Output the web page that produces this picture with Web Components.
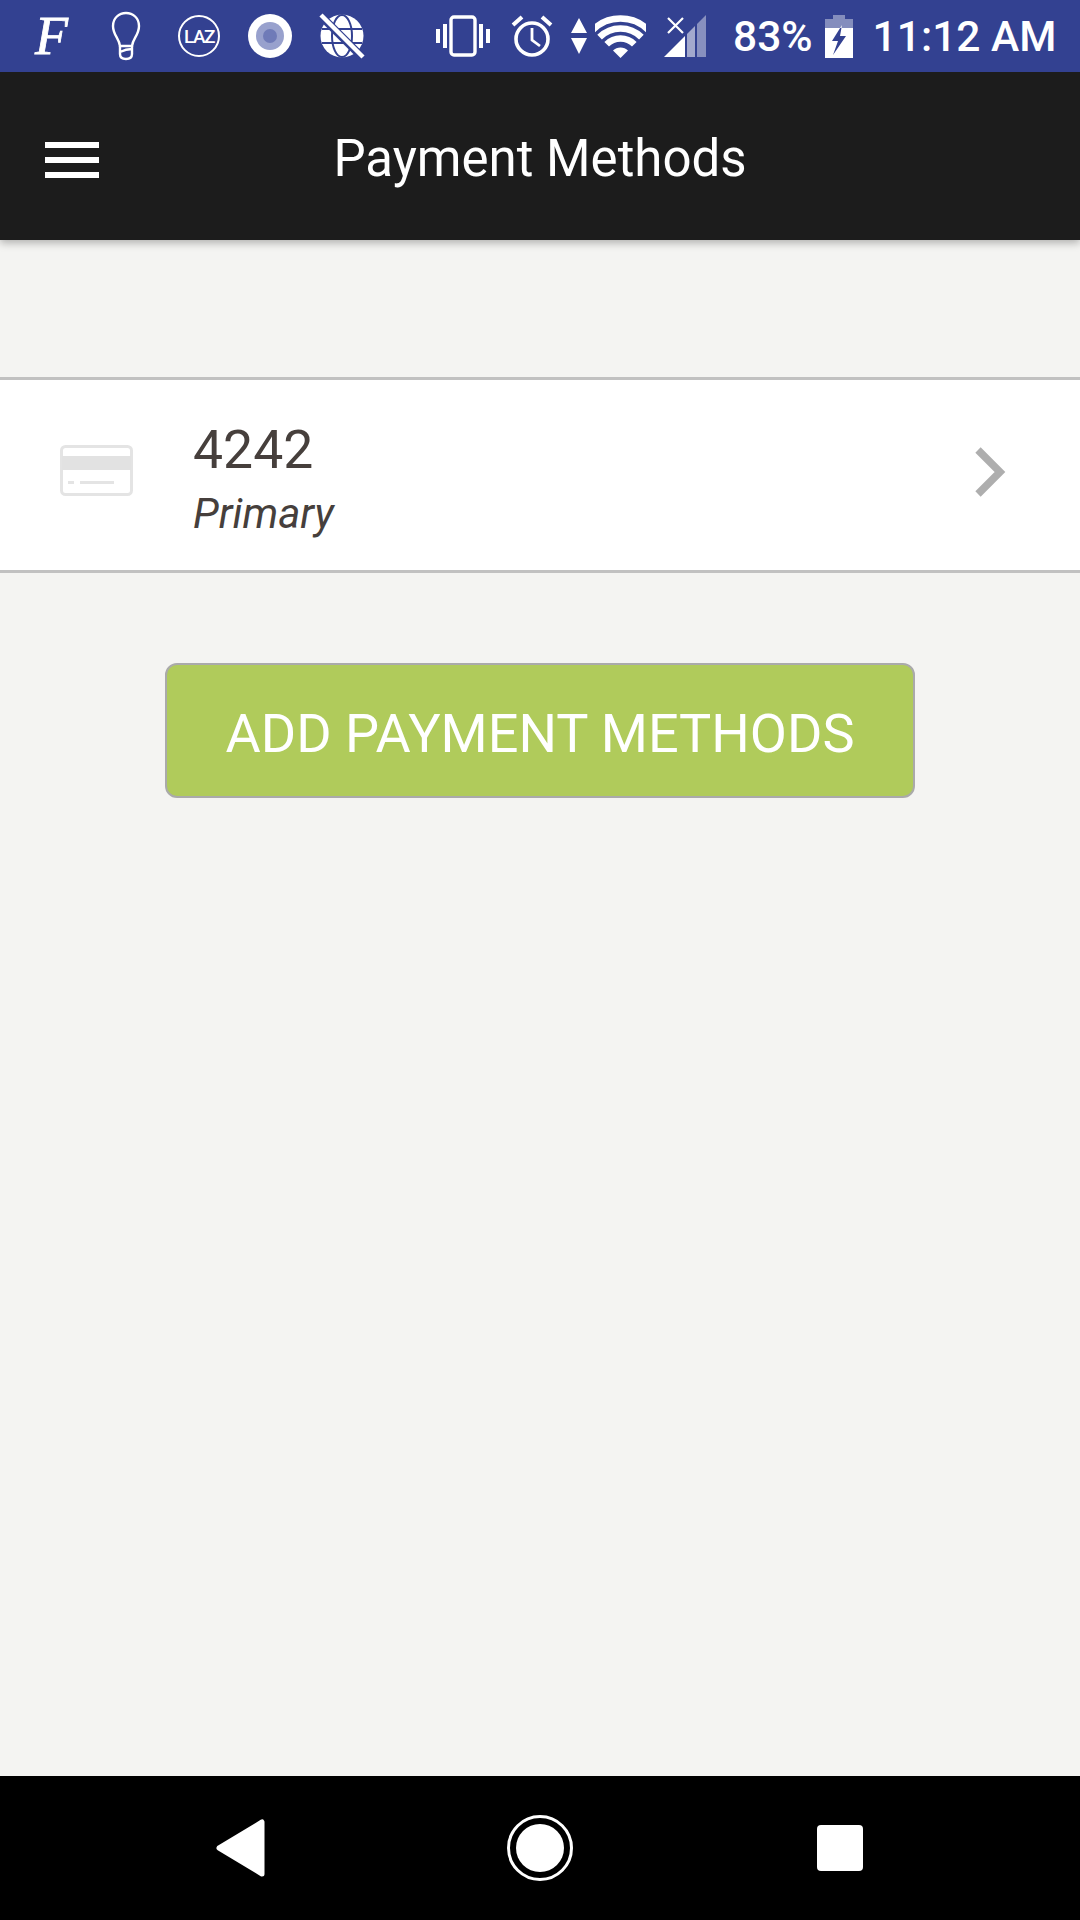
<!DOCTYPE html>
<html>
<head>
<meta charset="utf-8">
<title>Payment Methods</title>
<style>
  html, body { margin: 0; padding: 0; }
  body { font-family: Roboto, "Liberation Sans", sans-serif; background: #f4f4f2; }
</style>
</head>
<body>
<payment-screen>
  <status-bar slot="status" battery="83%" time="11:12 AM"></status-bar>
  <app-bar slot="header">Payment Methods</app-bar>
  <payment-row number="4242" label="Primary"></payment-row>
  <action-button>ADD PAYMENT METHODS</action-button>
  <nav-bar slot="nav"></nav-bar>
</payment-screen>

<script>
customElements.define('payment-screen', class extends HTMLElement {
  constructor() {
    super()
    this.attachShadow({ mode: 'open' }).innerHTML = `
      <style>
        :host { display: flex; flex-direction: column; width: 1080px; height: 1920px; overflow: hidden; background: #f4f4f2; }
        main { flex: 1; padding-top: 137px; }
      </style>
      <slot name="status"></slot>
      <slot name="header"></slot>
      <main><slot></slot></main>
      <slot name="nav"></slot>`
  }
})

customElements.define('status-bar', class extends HTMLElement {
  constructor() {
    super()
    this.attachShadow({ mode: 'open' }).innerHTML = `
      <style>
        :host { display: flex; align-items: center; height: 72px; background: #334191; color: #fff; font-family: Roboto, sans-serif; font-weight: 500; font-size: 42.5px; position: relative; z-index: 3; }
        svg { display: block; flex: none; }
        .txt { flex: none; line-height: 72px; padding-top: 2px; white-space: nowrap; }
        .f { font: italic 400 54px "Liberation Serif", serif; -webkit-text-stroke: .8px #fff; margin-left: 35px; width: 38px; line-height: 72px; }
      </style>
      <span class="f">F</span>
      <svg style="margin-left:38px" width="30" height="50" viewBox="0 0 30 50" fill="none" stroke="#fff" stroke-width="2.4">
        <path d="M9 35 C8 27 2 24 2 15 C2 7 8 2 15 2 C22 2 28 7 28 15 C28 24 22 27 21 35 Z"/>
        <path d="M9 35 V43 Q9 48 15 48 Q21 48 21 43 V35 M9 41 Q15 38 21 38"/>
      </svg>
      <svg style="margin-left:36px" width="44" height="44" viewBox="0 0 44 44">
        <circle cx="22" cy="22" r="20" fill="none" stroke="#fff" stroke-width="2"/>
        <text x="22" y="29" text-anchor="middle" fill="#fff" font-family="Roboto, sans-serif" font-size="19" letter-spacing="-1.5">LAZ</text>
      </svg>
      <svg style="margin-left:27px" width="44" height="44" viewBox="0 0 44 44">
        <circle cx="22" cy="22" r="22" fill="#fff"/>
        <circle cx="22" cy="22" r="14" fill="#98a1cd"/>
        <circle cx="22" cy="22" r="7" fill="#6f7bb8"/>
      </svg>
      <svg style="margin-left:27px" width="46" height="46" viewBox="0 0 46 46">
        <circle cx="23" cy="23" r="21.5" fill="#fff"/>
        <g fill="none" stroke="#334191" stroke-width="2">
          <ellipse cx="23" cy="23" rx="10" ry="21"/>
          <path d="M3 16 H43 M3 30 H43"/>
          <path d="M1 2 L44 45" stroke-width="8"/>
        </g>
        <path d="M2 2 L44 44" stroke="#fff" stroke-width="4.5" fill="none"/>
      </svg>
      <svg style="margin-left:71px" width="54" height="42" viewBox="0 0 54 42" fill="#fff">
        <rect x="0" y="14" width="4" height="14"/><rect x="7" y="9" width="4" height="24"/>
        <rect x="43" y="9" width="4" height="24"/><rect x="50" y="14" width="4" height="14"/>
        <rect x="15" y="2" width="24" height="38" rx="3" fill="none" stroke="#fff" stroke-width="3.4"/>
      </svg>
      <svg style="margin-left:21px" width="42" height="42" viewBox="0 0 42 42" fill="none" stroke="#fff">
        <circle cx="21" cy="24" r="16" stroke-width="3.6"/>
        <path d="M21 13 V25 L29 31" stroke-width="2.8"/>
        <path d="M2 10 L11 2 M40 10 L31 2" stroke-width="4"/>
      </svg>
      <svg style="margin-left:18px" width="16" height="36" viewBox="0 0 16 36" fill="#fff">
        <path d="M8 0 L16 15 H0 Z M0 20 H16 L8 36 Z"/>
      </svg>
      <svg style="margin-left:8px" width="51" height="43" viewBox="0 0 51 43" fill="none" stroke="#fff" stroke-width="6.5">
        <path d="M-2.4 15.1 A39.5 39.5 0 0 1 53.4 15.1"/>
        <path d="M4.6 22.1 A29.5 29.5 0 0 1 46.4 22.1"/>
        <path d="M11.7 29.2 A19.5 19.5 0 0 1 39.3 29.2"/>
        <path d="M18 35.5 A10.6 10.6 0 0 1 33 35.5 L25.5 43 Z" fill="#fff" stroke="none"/>
      </svg>
      <svg style="margin-left:18px" width="42" height="42" viewBox="0 0 42 42" fill="#fff">
        <path d="M33 42 V9 L42 0 V42 Z" opacity=".42"/>
        <path d="M23 42 V19 L31 11 V42 Z" opacity=".55"/>
        <path d="M0 42 L21 21 V42 Z"/>
        <path d="M4 3 L19 18 M19 3 L4 18" stroke="#fff" stroke-width="2.2"/>
      </svg>
      <span class="txt" style="margin-left:27px">${this.getAttribute('battery')}</span>
      <svg style="margin-left:12px" width="28" height="43" viewBox="0 0 28 43" fill="#fff">
        <path d="M8 0 H20 V4 H28 V13 H0 V4 H8 Z" opacity=".4"/>
        <path fill-rule="evenodd" d="M0 13 H28 V43 H0 Z M17 10 L7 26 H13 L8 40 L21 21 H15 Z"/>
      </svg>
      <span class="txt" style="margin-left:20px">${this.getAttribute('time')}</span>`
  }
})

customElements.define('app-bar', class extends HTMLElement {
  constructor() {
    super()
    this.attachShadow({ mode: 'open' }).innerHTML = `
      <style>
        :host { display: grid; grid-template-columns: 1fr auto 1fr; align-items: center; height: 168px; background: #1c1c1c; color: #fff; box-shadow: 0 3px 8px rgba(0,0,0,.28); position: relative; z-index: 2; }
        .menu { display: flex; flex-direction: column; gap: 9px; margin: 8px 0 0 45px; width: 54px; }
        .menu i { display: block; height: 6px; background: #fff; }
        h1 { margin: 0; padding-top: 5px; font: 400 51px Roboto, sans-serif; line-height: 1; }
      </style>
      <div class="menu"><i></i><i></i><i></i></div>
      <h1><slot></slot></h1>
      <div></div>`
  }
})

customElements.define('payment-row', class extends HTMLElement {
  constructor() {
    super()
    this.attachShadow({ mode: 'open' }).innerHTML = `
      <style>
        :host { display: flex; align-items: center; height: 190px; background: #fff; border-top: 3px solid #c1c1c1; border-bottom: 3px solid #c1c1c1; color: #463f3c; font-family: Roboto, sans-serif; }
        svg { display: block; flex: none; }
        .text { margin: 9px 0 0 60px; display: flex; flex-direction: column; }
        .num { font-size: 53.5px; line-height: 60px; }
        .label { font-size: 42px; font-style: italic; line-height: 52px; margin-top: 8px; }
        .go { margin-left: auto; margin-right: 74px; margin-bottom: 7px; }
      </style>
      <svg style="margin-left:60px;margin-bottom:10px" width="73" height="51" viewBox="0 0 73 51">
        <rect x="1.5" y="1.5" width="70" height="48" rx="4" fill="#fff" stroke="#e4e4e4" stroke-width="3"/>
        <rect x="2" y="11" width="69" height="14" fill="#e2e2e2"/>
        <rect x="8" y="36" width="6" height="3" fill="#e4e4e4"/>
        <rect x="20" y="36" width="34" height="3" fill="#e4e4e4"/>
      </svg>
      <div class="text">
        <span class="num">${this.getAttribute('number')}</span>
        <span class="label">${this.getAttribute('label')}</span>
      </div>
      <svg class="go" width="32" height="50" viewBox="0 0 32 50" fill="none" stroke="#aeaeae" stroke-width="7.5">
        <path d="M4 3 L26 25 L4 47"/>
      </svg>`
  }
})

customElements.define('action-button', class extends HTMLElement {
  constructor() {
    super()
    this.attachShadow({ mode: 'open' }).innerHTML = `
      <style>
        :host { display: block; margin-top: 90px; }
        button { display: block; box-sizing: border-box; width: 750px; height: 135px; margin: 0 auto; padding: 5px 0 0; background: #b0cb5b; color: #fff; border: 2.5px solid #aaaaaa; border-radius: 12px; font: 400 54px Roboto, sans-serif; }
      </style>
      <button><slot></slot></button>`
  }
})

customElements.define('nav-bar', class extends HTMLElement {
  constructor() {
    super()
    this.attachShadow({ mode: 'open' }).innerHTML = `
      <style>
        :host { display: flex; align-items: center; height: 144px; background: #000; }
        svg { display: block; flex: none; }
      </style>
      <svg style="margin-left:216px" width="49" height="58" viewBox="0 0 49 58" fill="#fff" stroke="#fff" stroke-width="5" stroke-linejoin="round">
        <path d="M3 29 L46 3 V55 Z"/>
      </svg>
      <svg style="margin-left:242px" width="66" height="66" viewBox="0 0 66 66">
        <circle cx="33" cy="33" r="31.5" fill="none" stroke="#fff" stroke-width="3"/>
        <circle cx="33" cy="33" r="24" fill="#fff"/>
      </svg>
      <svg style="margin-left:244px" width="46" height="46" viewBox="0 0 46 46">
        <rect width="46" height="46" rx="4" fill="#fff"/>
      </svg>`
  }
})
</script>
</body>
</html>
